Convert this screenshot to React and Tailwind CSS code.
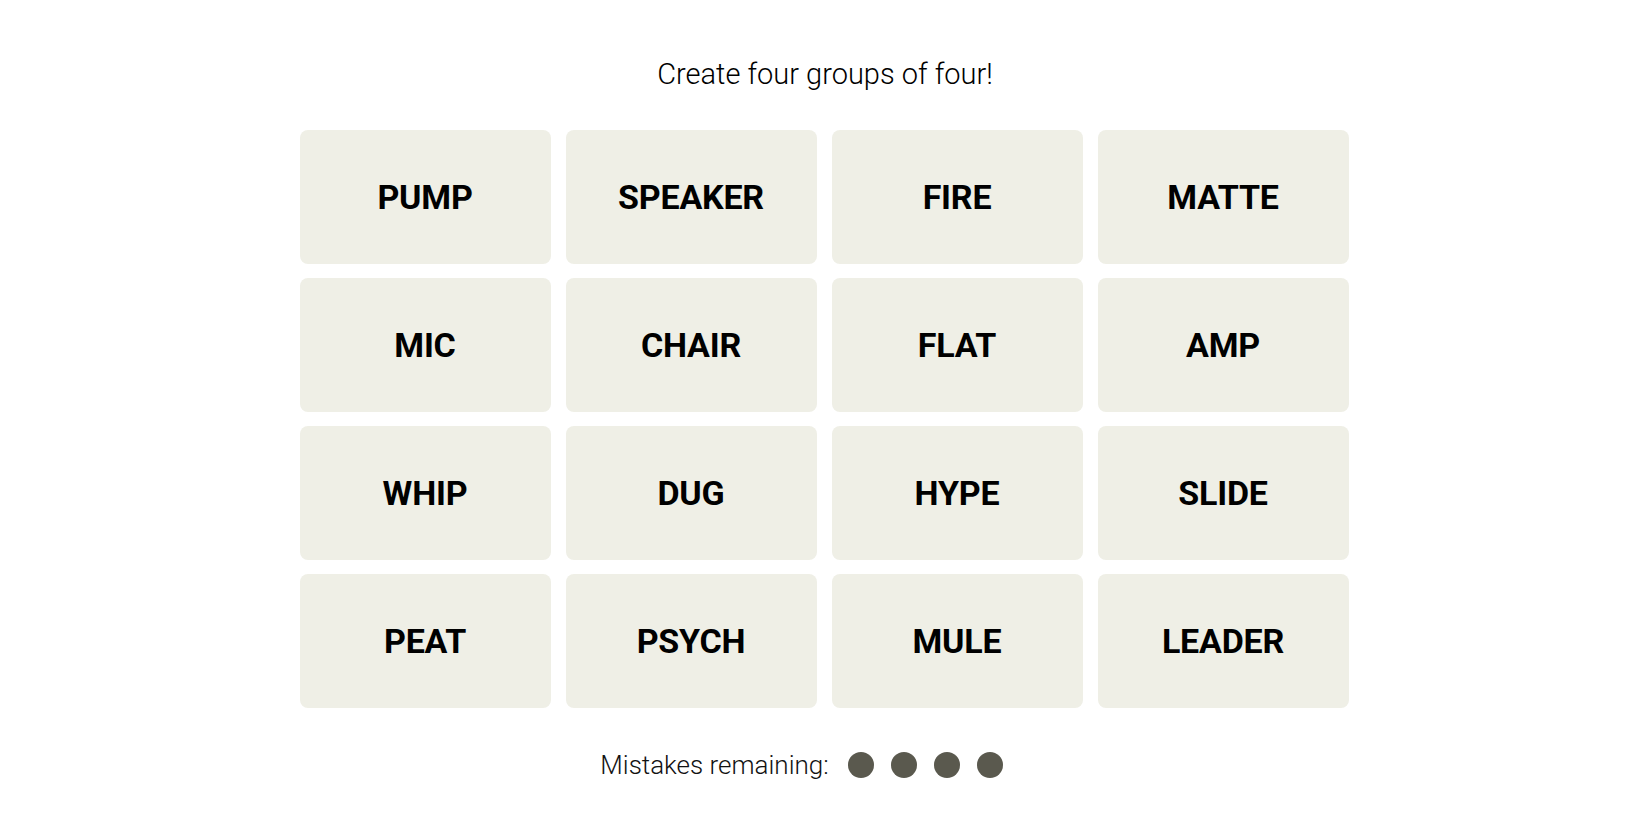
const WORDS = [
  'PUMP', 'SPEAKER', 'FIRE', 'MATTE',
  'MIC', 'CHAIR', 'FLAT', 'AMP',
  'WHIP', 'DUG', 'HYPE', 'SLIDE',
  'PEAT', 'PSYCH', 'MULE', 'LEADER',
];

export default function App() {
  return (
    <div className="min-h-screen bg-white flex flex-col items-center font-['Roboto','Liberation_Sans',sans-serif] text-black">
      {/* Heading */}
      <p className="mt-[57px] h-[34px] leading-[34px] text-[29px] font-light">Create four groups of four!</p>

      {/* Word grid */}
      <div className="mt-[39px] -ml-[2px] grid grid-cols-[repeat(4,251px)] grid-rows-[repeat(4,134px)] gap-x-[15px] gap-y-[14px]">
        {WORDS.map((w) => (
          <button
            key={w}
            className="rounded-[8px] bg-[#efefe6] flex items-center justify-center text-[34px] font-bold tracking-[-0.2px]"
          >
            {w}
          </button>
        ))}
      </div>

      {/* Mistakes */}
      <div className="mt-[41px] mr-[47px] h-[32px] flex items-center gap-[19px]">
        <span className="text-[26px] font-light text-[#121212]">Mistakes remaining:</span>
        <div className="flex gap-[17px]">
          {[0, 1, 2, 3].map((i) => (
            <span key={i} className="w-[26px] h-[26px] rounded-full bg-[#5a594e]" />
          ))}
        </div>
      </div>
    </div>
  );
}
